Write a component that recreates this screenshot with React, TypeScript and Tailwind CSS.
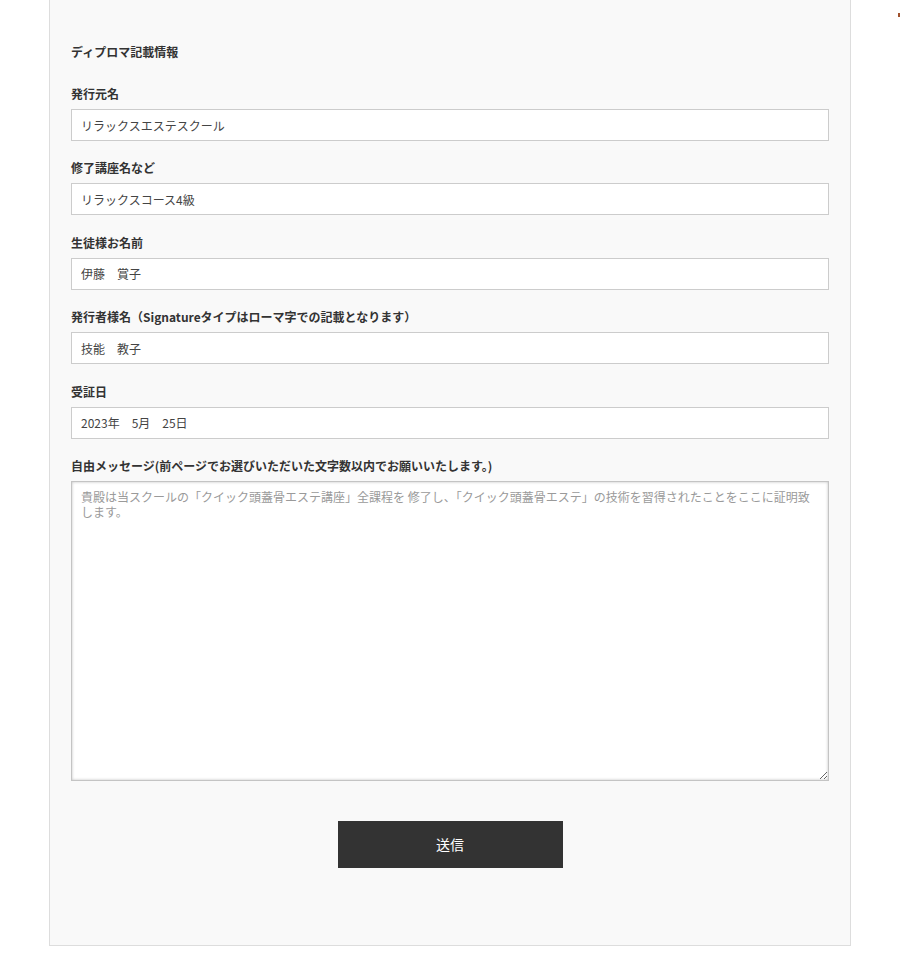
import React from 'react';

const font = { fontFamily: '"Noto Sans CJK JP", "Noto Sans", sans-serif' };

interface FieldProps {
  label: string;
  value: string;
  first?: boolean;
}

const Field = ({ label, value, first = false }: FieldProps) => (
  <div className={first ? '' : 'mt-[18.4px]'}>
    <label className="block text-[12px] leading-[18px] font-bold text-[#333] mb-[6px]">{label}</label>
    <input
      type="text"
      defaultValue={value}
      className="block w-full h-[32px] border border-[#cccccc] bg-white px-[9px] text-[12px] text-[#444] outline-none"
    />
  </div>
);

export default function App() {
  return (
    <div className="relative min-h-screen bg-white" style={font}>
      <span className="absolute right-0 top-[13px] w-[2px] h-[4px] bg-[#a0522d]" />
      <div className="ml-[49px] w-[802px] border border-t-0 border-[#dddddd] bg-[#f9f9f9] px-[21px] pt-[43px] pb-[77px]">
        <h2 className="text-[12px] leading-[18px] font-bold text-[#333] mb-[24px]">ディプロマ記載情報</h2>

        <Field first label="発行元名" value="リラックスエステスクール" />
        <Field label="修了講座名など" value="リラックスコース4級" />
        <Field label="生徒様お名前" value="伊藤　賞子" />
        <Field label="発行者様名（Signatureタイプはローマ字での記載となります）" value="技能　教子" />
        <Field label="受証日" value="2023年　5月　25日" />

        <div className="mt-[18.4px]">
          <label className="block text-[12px] leading-[18px] font-bold text-[#333] mb-[6px]">
            自由メッセージ(前ページでお選びいただいた文字数以内でお願いいたします。)
          </label>
          <textarea
            placeholder="貴殿は当スクールの「クイック頭蓋骨エステ講座」全課程を 修了し、「クイック頭蓋骨エステ」の技術を習得されたことをここに証明致します。"
            className="block w-full h-[300px] border border-[#c4c4c4] bg-white px-[9px] py-[7px] text-[12px] leading-[15px] text-[#444] placeholder:text-[#9a9a9a] shadow-[inset_0_0_3px_rgba(0,0,0,0.25)] outline-none"
          />
        </div>

        <div className="mt-[40px] flex justify-center">
          <button className="w-[225px] h-[47px] bg-[#333333] text-white text-[14px]">送信</button>
        </div>
      </div>
    </div>
  );
}
